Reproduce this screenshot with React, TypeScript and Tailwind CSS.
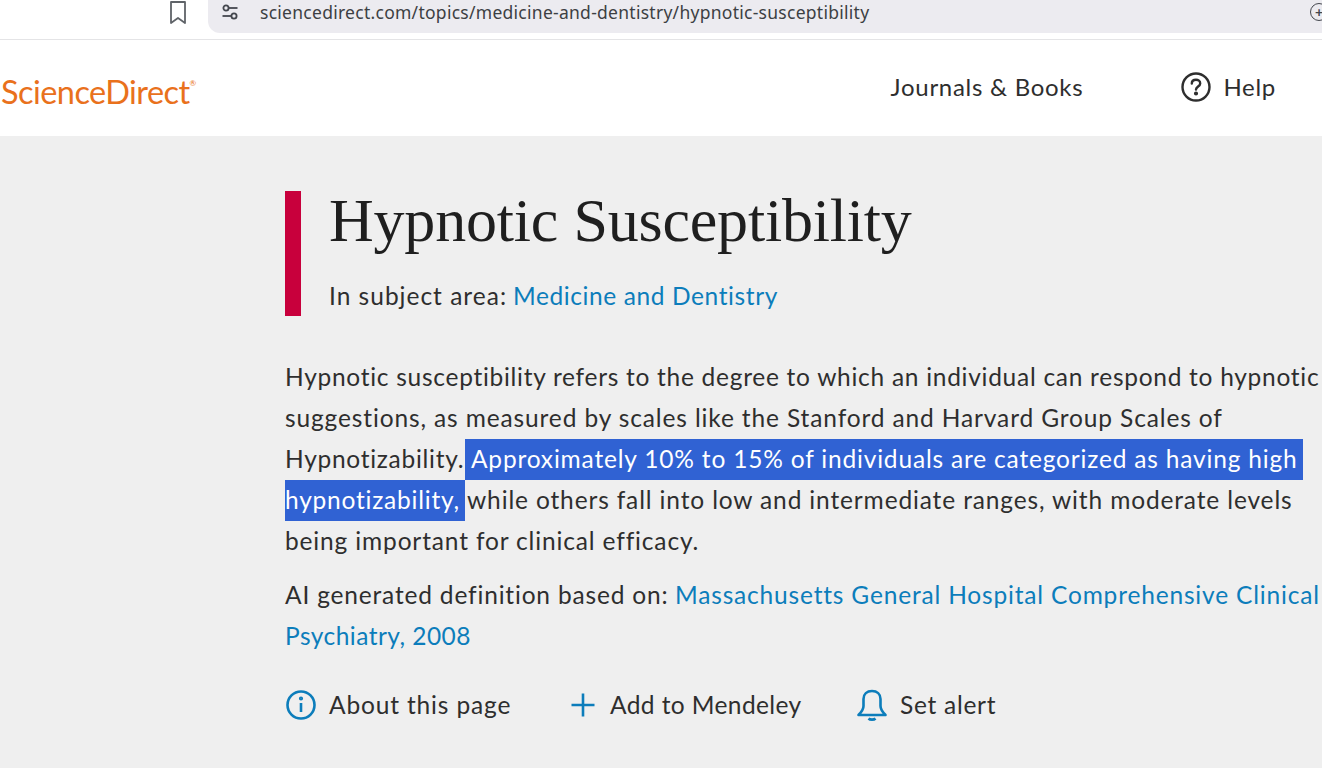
import React from "react";

const sans = "font-['Lato','Noto_Sans',sans-serif]";

function Tune() {
  return (
    <svg width="18" height="18" viewBox="0 0 18 18" fill="none" stroke="#44474e" strokeWidth="1.8">
      <circle cx="5" cy="5" r="2.6" />
      <path d="M8 5h8.5" />
      <circle cx="13" cy="13" r="2.6" />
      <path d="M1.5 13h8.5" />
    </svg>
  );
}

export default function App() {
  return (
    <div className={`h-[768px] w-[1322px] overflow-hidden bg-[#efefef] ${sans}`}>
      <div className="flex h-[40px] items-start border-b border-[#e4e4e6] bg-white">
        <div className="ml-[168px] flex h-6 w-[20px] items-center justify-center">
          <svg width="18" height="24" viewBox="0 0 18 24" fill="none" stroke="#5f6368" strokeWidth="1.8">
            <path d="M2 2h14v21l-7-5-7 5z" strokeLinejoin="round" />
          </svg>
        </div>
        <div className="ml-[20px] flex h-[33px] flex-1 items-center rounded-bl-[12px] bg-[#ecebf0] pl-[13px]">
          <div className="mb-[9px]">
            <Tune />
          </div>
          <span className="ml-[21px] pb-[9px] font-['Noto_Sans',sans-serif] text-[17.5px] tracking-[0.27px] text-[#3c4043]">
            sciencedirect.com/topics/medicine-and-dentistry/hypnotic-susceptibility
          </span>
          <div className="ml-auto -mr-[6px] mb-[9px] flex h-[18px] w-[18px] items-center justify-center rounded-full border-[1.5px] border-[#44474e] text-[14px] font-bold leading-none text-[#44474e]">+</div>
        </div>
      </div>

      <header className="flex h-[96px] items-center bg-white">
        <div className="ml-[1px] mt-[9px] flex items-start text-[#e9711c]">
          <span className="text-[32.5px] leading-none tracking-[-0.55px]">ScienceDirect</span>
          <span className="text-[8px] leading-[14px]">®</span>
        </div>
        <nav className="-mt-[2px] ml-auto flex items-center pr-[46px] text-[24px] tracking-[0.72px] text-[#2e2e2e]">
          <span>Journals &amp; Books</span>
          <svg className="ml-[97px]" width="32" height="32" viewBox="0 0 32 32" fill="none" stroke="#2e2e2e" strokeWidth="2.4">
            <circle cx="16" cy="16" r="13.5" />
            <path d="M11.8 12.6c0-2.4 1.9-3.8 4.2-3.8s4.2 1.4 4.2 3.6c0 3-4.2 3.2-4.2 6.2" strokeLinecap="round" />
            <circle cx="16" cy="22.5" r="0.9" fill="#2e2e2e" />
          </svg>
          <span className="ml-[11px]">Help</span>
        </nav>
      </header>

      <main className="pl-[285px] pt-[55px]">
        <div className="flex h-[125px] w-[800px]">
          <div className="w-4 bg-[#c8003c]" />
          <div className="pl-[28px]">
            <h1 className="-mt-[1px] font-['Liberation_Serif',serif] text-[62px] leading-[60px] tracking-[-0.2px] text-[#1f1f1f]">
              Hypnotic Susceptibility
            </h1>
            <p className="mt-[31px] flex text-[24.5px] leading-[30px] text-[#2e2e2e]">
              <span className="w-[184px] tracking-[1px]">In subject area:</span>
              <span className="tracking-[0.6px] text-[#0c7dbb]">Medicine and Dentistry</span>
            </p>
          </div>
        </div>

        <div className="mt-[41px] whitespace-nowrap text-[24.5px] leading-[39px] tracking-[0.72px] text-[#2e2e2e]">
          <div className="h-[41px]">Hypnotic susceptibility refers to the degree to which an individual can respond to hypnotic</div>
          <div className="h-[41px] tracking-[0.87px]">suggestions, as measured by scales like the Stanford and Harvard Group Scales of</div>
          <div className="flex h-[41px]">
            <span className="w-[180px]">Hypnotizability.</span>
            <span className="w-[838px] bg-[#3062d3] pl-[6px] tracking-[0.82px] text-white">Approximately 10% to 15% of individuals are categorized as having high</span>
          </div>
          <div className="flex h-[41px]">
            <span className="w-[180px] bg-[#3062d3] tracking-[0.78px] text-white">hypnotizability,</span>
            <span className="ml-[2px] tracking-[0.86px]">while others fall into low and intermediate ranges, with moderate levels</span>
          </div>
          <div className="h-[41px] tracking-[0.85px]">being important for clinical efficacy.</div>
          <div className="mt-[13px] flex h-[41px]">
            <span className="w-[390px] tracking-[0.82px]">AI generated definition based on:</span>
            <span className="tracking-[0.82px] text-[#0c7dbb]">Massachusetts General Hospital Comprehensive Clinical</span>
          </div>
          <div className="h-[41px] tracking-[0.47px] text-[#0c7dbb]">Psychiatry, 2008</div>
        </div>

        <div className="mt-[28px] flex h-[40px] items-center whitespace-nowrap text-[24.5px] tracking-[0.85px] text-[#2e2e2e]">
          <svg className="w-8 shrink-0" width="32" height="32" viewBox="0 0 32 32" fill="none" stroke="#0c7dbb" strokeWidth="2.6">
            <circle cx="16" cy="16" r="13.5" />
            <path d="M16 14v9" />
            <circle cx="16" cy="9.5" r="0.8" fill="#0c7dbb" />
          </svg>
          <span className="ml-[12px] w-[181px]">About this page</span>
          <svg className="ml-[60px] shrink-0" width="26" height="26" viewBox="0 0 26 26" fill="none" stroke="#0c7dbb" strokeWidth="2.6">
            <path d="M13 1.5v23M1.5 13h23" />
          </svg>
          <span className="ml-[14px] w-[191px] tracking-[0.4px]">Add to Mendeley</span>
          <svg className="ml-[55px] shrink-0" width="32" height="32" viewBox="0 0 32 32" fill="none" stroke="#0c7dbb" strokeWidth="2.6">
            <path d="M2.5 26c3-3 5-5 5-9V10c0-5 3.5-8 8.5-8s8.5 3 8.5 8v7c0 4 2 6 5 9z" strokeLinejoin="round" />
            <path d="M12.5 29.5c1.5 1.5 5.5 1.5 7 0" />
          </svg>
          <span className="ml-[12px] tracking-[0.72px]">Set alert</span>
        </div>
      </main>
    </div>
  );
}
